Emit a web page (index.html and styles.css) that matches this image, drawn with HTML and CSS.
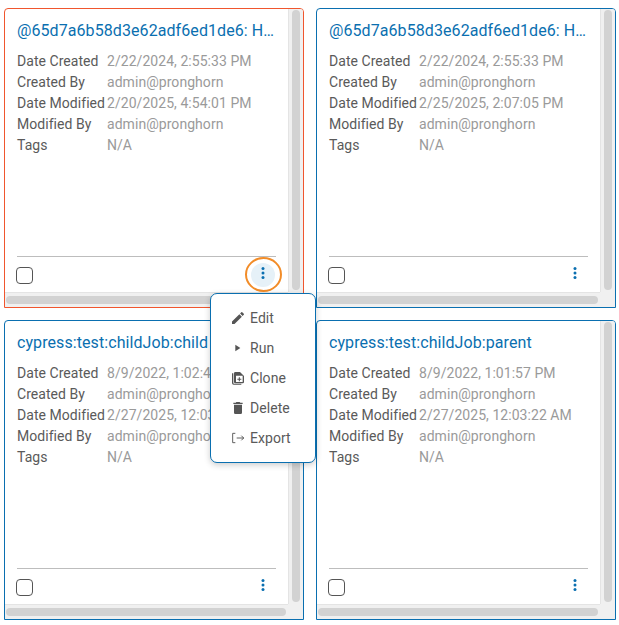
FILE: index.html
```html
<!DOCTYPE html>
<html lang="en">
<head>
    <meta charset="UTF-8">
    <title>Jobs</title>
    <link rel="stylesheet" href="styles.css">
</head>
<body>

    <div class="card-grid">
        <!-- first card, selected -->
        <div class="card card-selected">
            <div class="card-scroll">
                <h2 class="card-title">@65d7a6b58d3e62adf6ed1de6: Hello World Job</h2>
                <dl class="card-info">
                    <dt>Date Created</dt><dd>2/22/2024, 2:55:33 PM</dd>
                    <dt>Created By</dt><dd>admin@pronghorn</dd>
                    <dt>Date Modified</dt><dd>2/20/2025, 4:54:01 PM</dd>
                    <dt>Modified By</dt><dd>admin@pronghorn</dd>
                    <dt>Tags</dt><dd>N/A</dd>
                </dl>
                <div class="card-footer">
                    <span class="checkbox"></span>
                    <button class="more-button more-open">
                        <svg width="4" height="12" viewBox="0 0 4 12"><circle cx="2" cy="1.5" r="1.5"/><circle cx="2" cy="6" r="1.5"/><circle cx="2" cy="10.5" r="1.5"/></svg>
                    </button>
                </div>
            </div>
            <div class="scroll-v"><span class="thumb"></span></div>
            <div class="scroll-h"><span class="thumb"></span></div>
            <div class="scroll-corner"></div>
        </div>

        <div class="card">
            <div class="card-scroll">
                <h2 class="card-title">@65d7a6b58d3e62adf6ed1de6: Hello World Job</h2>
                <dl class="card-info">
                    <dt>Date Created</dt><dd>2/22/2024, 2:55:33 PM</dd>
                    <dt>Created By</dt><dd>admin@pronghorn</dd>
                    <dt>Date Modified</dt><dd>2/25/2025, 2:07:05 PM</dd>
                    <dt>Modified By</dt><dd>admin@pronghorn</dd>
                    <dt>Tags</dt><dd>N/A</dd>
                </dl>
                <div class="card-footer">
                    <span class="checkbox"></span>
                    <button class="more-button">
                        <svg width="4" height="12" viewBox="0 0 4 12"><circle cx="2" cy="1.5" r="1.5"/><circle cx="2" cy="6" r="1.5"/><circle cx="2" cy="10.5" r="1.5"/></svg>
                    </button>
                </div>
            </div>
            <div class="scroll-v"><span class="thumb"></span></div>
            <div class="scroll-h"><span class="thumb"></span></div>
            <div class="scroll-corner"></div>
        </div>

        <div class="card">
            <div class="card-scroll">
                <h2 class="card-title">cypress:test:childJob:child</h2>
                <dl class="card-info">
                    <dt>Date Created</dt><dd>8/9/2022, 1:02:43 PM</dd>
                    <dt>Created By</dt><dd>admin@pronghorn</dd>
                    <dt>Date Modified</dt><dd>2/27/2025, 12:03:22 AM</dd>
                    <dt>Modified By</dt><dd>admin@pronghorn</dd>
                    <dt>Tags</dt><dd>N/A</dd>
                </dl>
                <div class="card-footer">
                    <span class="checkbox"></span>
                    <button class="more-button">
                        <svg width="4" height="12" viewBox="0 0 4 12"><circle cx="2" cy="1.5" r="1.5"/><circle cx="2" cy="6" r="1.5"/><circle cx="2" cy="10.5" r="1.5"/></svg>
                    </button>
                </div>
            </div>
            <div class="scroll-v"><span class="thumb"></span></div>
            <div class="scroll-h"><span class="thumb"></span></div>
            <div class="scroll-corner"></div>
        </div>

        <div class="card">
            <div class="card-scroll">
                <h2 class="card-title">cypress:test:childJob:parent</h2>
                <dl class="card-info">
                    <dt>Date Created</dt><dd>8/9/2022, 1:01:57 PM</dd>
                    <dt>Created By</dt><dd>admin@pronghorn</dd>
                    <dt>Date Modified</dt><dd>2/27/2025, 12:03:22 AM</dd>
                    <dt>Modified By</dt><dd>admin@pronghorn</dd>
                    <dt>Tags</dt><dd>N/A</dd>
                </dl>
                <div class="card-footer">
                    <span class="checkbox"></span>
                    <button class="more-button">
                        <svg width="4" height="12" viewBox="0 0 4 12"><circle cx="2" cy="1.5" r="1.5"/><circle cx="2" cy="6" r="1.5"/><circle cx="2" cy="10.5" r="1.5"/></svg>
                    </button>
                </div>
            </div>
            <div class="scroll-v"><span class="thumb"></span></div>
            <div class="scroll-h"><span class="thumb"></span></div>
            <div class="scroll-corner"></div>
        </div>
    </div>

    <!-- popup menu of the first card -->
    <ul class="popup-menu">
        <li>
            <svg width="16" height="16" viewBox="0 0 24 24"><path d="M3 17.25V21h3.75L17.81 9.94l-3.75-3.75L3 17.25zM20.71 7.04a1 1 0 0 0 0-1.41l-2.34-2.34a1 1 0 0 0-1.41 0l-1.83 1.83 3.75 3.75 1.83-1.83z"/></svg>
            <span>Edit</span>
        </li>
        <li>
            <svg width="16" height="16" viewBox="0 0 24 24"><path d="M8 7v10l7.500-5z"/></svg>
            <span>Run</span>
        </li>
        <li>
            <svg width="16" height="16" viewBox="0 0 24 24"><path d="M5 5H3v14.500A2.500 2.500 0 0 0 5.500 22H17v-1.500H6A1 1 0 0 1 5 19.500z"/><path fill-rule="evenodd" d="M15 3H8a2 2 0 0 0-2 2v13a2 2 0 0 0 2 2h11a2 2 0 0 0 2-2V9zM9 8.500h10V18H9zm4.200 2.500h1.600v2.200H17v1.600h-2.200V17h-1.600v-2.200H11v-1.600h2.200z"/></svg>
            <span>Clone</span>
        </li>
        <li>
            <svg width="16" height="16" viewBox="0 0 24 24"><path d="M6 19a2 2 0 0 0 2 2h8a2 2 0 0 0 2-2V7H6zM19 4h-3.500l-1-1h-5l-1 1H5v2h14z"/></svg>
            <span>Delete</span>
        </li>
        <li>
            <svg width="16" height="16" viewBox="0 0 24 24" class="icon-line"><path d="M8 5H4v14h4M10 12h11M17 8.500l3.500 3.500-3.500 3.500"/></svg>
            <span>Export</span>
        </li>
    </ul>

</body>
</html>
```

FILE: styles.css
```css
body {
    margin: 0;
    padding: 8px 3px 0 4px;
    background-color: #fff;
    font-family: Roboto, "Liberation Sans", sans-serif;
    font-size: 14px;
    letter-spacing: 0.05px;
    overflow: hidden;
    position: relative;
}
.card-grid {
    display: grid;
    grid-template-columns: 300px 300px;
    grid-auto-rows: 300px;
    gap: 12px;
}
/* card with its fake scrollbars */
.card {
    display: grid;
    grid-template-columns: 1fr 15px;
    grid-template-rows: 1fr 15px;
    border: 1px solid #0a6fb0;
    border-radius: 4px 4px 0 0;
    overflow: hidden;
    box-sizing: border-box;
}
.card-selected {
    border-color: #f0562e;
}
.card-scroll {
    display: flex;
    flex-direction: column;
    padding: 0 12px 0 12px;
    min-width: 0;
}
.card-title {
    margin: 10px 0 0;
    font-size: 16px;
    font-weight: 400;
    letter-spacing: 0.08px;
    line-height: 24px;
    color: #0a6fb0;
    white-space: nowrap;
    overflow: hidden;
    text-overflow: ellipsis;
}
.card-info {
    display: grid;
    grid-template-columns: 90px 1fr;
    grid-auto-rows: 21px;
    margin: 8px 0 0;
    line-height: 21px;
}
.card-info dt {
    color: #5a5a5a;
    white-space: nowrap;
}
.card-info dd {
    margin: 0;
    color: #9a9a9a;
    white-space: nowrap;
}
.card-footer {
    display: flex;
    align-items: center;
    justify-content: space-between;
    margin-top: auto;
    height: 35px;
    border-top: 1px solid #bdbdbd;
}
.checkbox {
    width: 15px;
    height: 15px;
    margin: 1px 0 0 -1px;
    border: 1.5px solid #555;
    border-radius: 4px;
}
.more-button {
    position: relative;
    display: flex;
    align-items: center;
    justify-content: center;
    width: 24px;
    height: 24px;
    margin-right: 1px;
    padding: 0;
    border: none;
    border-radius: 50%;
    background: none;
    fill: #0a6fb0;
}
.more-button svg {
    margin-bottom: 3px;
}
.more-open {
    background-color: #e6f1f8;
}
.more-open::after {
    content: "";
    position: absolute;
    top: -6px;
    left: -6px;
    width: 33px;
    height: 31px;
    border: 2.5px solid #f28c28;
    border-radius: 50%;
}
/* scrollbars */
.scroll-v,
.scroll-h,
.scroll-corner {
    background-color: #f0f0f0;
}
.scroll-v {
    grid-row: 1 / 2;
    grid-column: 2;
    display: flex;
    padding: 1px 3px 2px 3px;
    border-left: 1px solid #e4e4e4;
    box-sizing: border-box;
}
.scroll-h {
    grid-row: 2;
    grid-column: 1;
    display: flex;
    padding: 3px 2px 3px 1px;
    border-top: 1px solid #e4e4e4;
    box-sizing: border-box;
}
.thumb {
    flex: 1;
    background-color: #d2d2d2;
    border-radius: 5px;
}
/* popup menu */
.popup-menu {
    position: absolute;
    top: 293px;
    left: 210px;
    width: 106px;
    height: 170px;
    box-sizing: border-box;
    margin: 0;
    padding: 9px 0;
    list-style: none;
    background-color: #fff;
    border: 1px solid #0a6fb0;
    border-radius: 7px;
    box-shadow: 0 2px 6px rgba(0, 0, 0, 0.2);
}
.popup-menu li {
    display: flex;
    align-items: center;
    gap: 4px;
    height: 30px;
    padding-left: 19px;
    color: #5a5a5a;
    fill: #555;
}
.icon-line {
    fill: none;
    stroke: #555;
    stroke-width: 1.4;
}
```
